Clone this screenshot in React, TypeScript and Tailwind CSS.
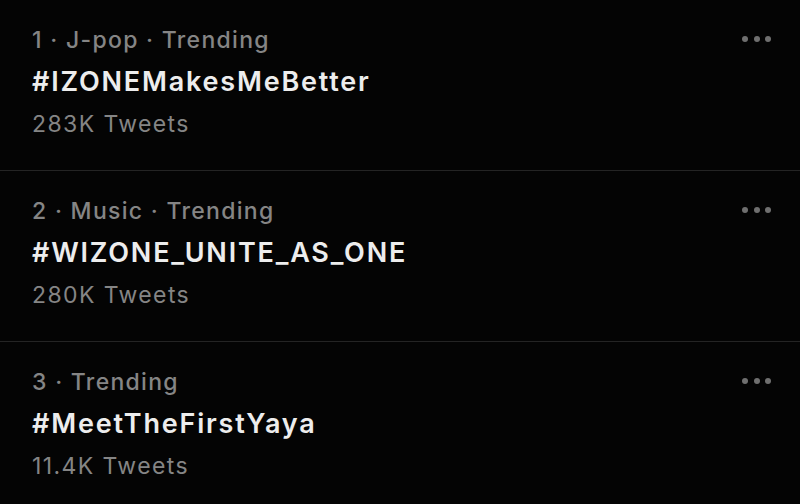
const trends = [
  { meta: '1 · J-pop · Trending', tag: '#IZONEMakesMeBetter', count: '283K Tweets' },
  { meta: '2 · Music · Trending', tag: '#WIZONE_UNITE_AS_ONE', count: '280K Tweets' },
  { meta: '3 · Trending', tag: '#MeetTheFirstYaya', count: '11.4K Tweets' },
]

function MoreDots() {
  return (
    <div className="flex items-center gap-[5.5px] h-[40px]">
      <span className="w-[6px] h-[6px] rounded-full bg-[#6f6f6f]" />
      <span className="w-[6px] h-[6px] rounded-full bg-[#6f6f6f]" />
      <span className="w-[6px] h-[6px] rounded-full bg-[#6f6f6f]" />
    </div>
  )
}

export default function App() {
  return (
    <div
      className="w-[800px] h-[504px] overflow-hidden bg-[#040404]"
      style={{ fontFamily: 'Inter, "Noto Sans", sans-serif' }}
    >
      {trends.map((t) => (
        <div key={t.tag} className="flex justify-between pl-[32px] pr-[29px] pt-[19px] pb-[24px] border-b border-[#242424]">
          <div className="flex flex-col">
            <div className="text-[23px] leading-[42px] text-[#858585] font-medium tracking-[1.3px]">{t.meta}</div>
            <div className="text-[27px] leading-[42px] text-[#ededed] font-semibold tracking-[1.8px]">{t.tag}</div>
            <div className="text-[23px] leading-[43px] text-[#858585] tracking-[1.4px]">{t.count}</div>
          </div>
          <MoreDots />
        </div>
      ))}
    </div>
  )
}
